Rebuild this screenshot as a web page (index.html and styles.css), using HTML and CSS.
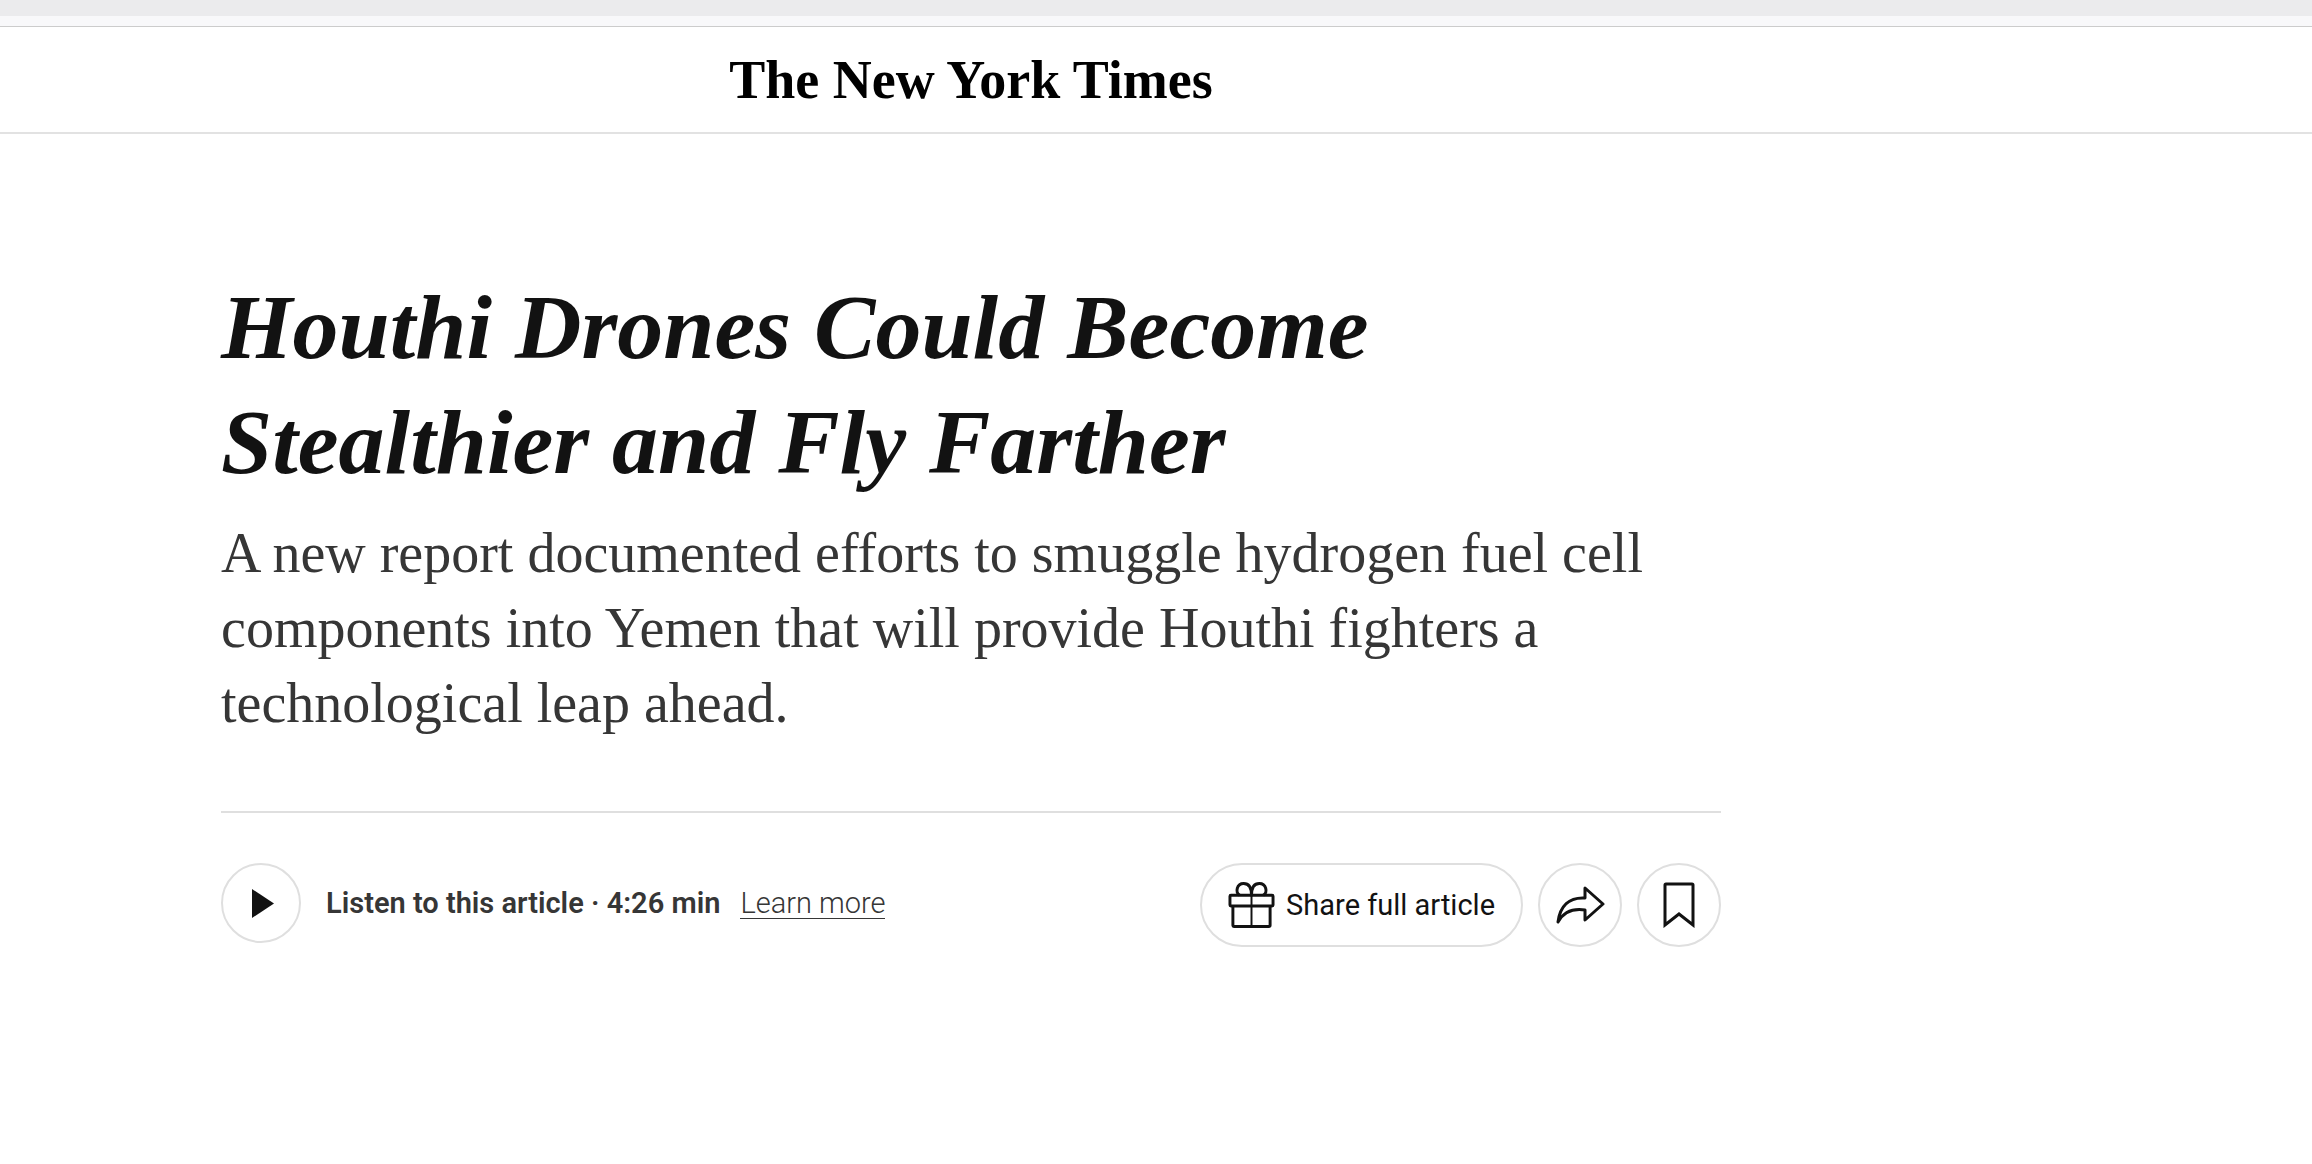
FILE: index.html
```html
<!DOCTYPE html>
<html lang="en">
<head>
<meta charset="utf-8">
<meta name="viewport" content="width=device-width, initial-scale=1">
<title>Houthi Drones Could Become Stealthier and Fly Farther</title>
<link rel="stylesheet" href="styles.css">
</head>
<body>
<div class="browser-edge"></div>
<header class="masthead">
  <div class="column masthead-inner"><a class="logo" href="#">The New York Times</a></div>
</header>
<main class="column">
  <article class="story">
    <h1 class="headline">Houthi Drones Could Become<br>Stealthier and Fly Farther</h1>
    <p class="summary">A new report documented efforts to smuggle hydrogen fuel cell<br>components into Yemen that will provide Houthi fighters a<br>technological leap ahead.</p>
    <div class="toolbar">
      <div class="listen">
        <button class="round play" type="button" aria-label="Play">
          <svg width="22" height="29" viewBox="0 0 22 29" aria-hidden="true"><path d="M0 0 22 14.5 0 29Z" fill="#121212"/></svg>
        </button>
        <span class="listen-label">Listen to this article · 4:26 min</span>
        <a class="learn" href="#">Learn more</a>
      </div>
      <div class="actions">
        <button class="share-gift" type="button">
          <svg width="47" height="48" viewBox="0 0 48 48" fill="none" stroke="#121212" stroke-width="2" stroke-linejoin="round" aria-hidden="true">
            <rect x="2" y="14" width="44" height="11" rx="1" stroke-width="3"/>
            <path d="M5 25V45Q5 46 6 46H42Q43 46 43 45V25" stroke-width="3"/>
            <path d="M24 14V46"/>
            <path d="M12 14C7 11 9 2 16 2C21 2 24 6 24 14C24 6 27 2 32 2C39 2 41 11 36 14" stroke-width="3"/>
          </svg>
          <span>Share full article</span>
        </button>
        <button class="round" type="button" aria-label="Share">
          <svg width="50" height="40" viewBox="0 0 50 40" fill="none" stroke="#121212" stroke-width="3" stroke-linejoin="round" aria-hidden="true"><path d="M30 3 48 19 30 35V25C17 23 8 28 3 37C5 21 14 12 30 13Z"/></svg>
        </button>
        <button class="round" type="button" aria-label="Save">
          <svg width="32" height="46" viewBox="0 0 32 46" fill="none" stroke="#121212" stroke-width="3" aria-hidden="true"><path d="M2 43V3Q2 2 3 2H29Q30 2 30 3V43L16 32Z"/></svg>
        </button>
      </div>
    </div>
  </article>
</main>
</body>
</html>
```
FILE: styles.css
```css
* {
  box-sizing: border-box;
}

body {
  margin: 0;
  background: #fff;
  color: #121212;
  font-family: Roboto, "Liberation Sans", Arial, sans-serif;
}

.browser-edge {
  height: 27px;
  border-top: 16px solid #ebebed;
  border-bottom: 1px solid #ccc;
  background: #f8f8fa;
}

.masthead {
  border-bottom: 2px solid #e2e2e2;
}

.column {
  width: 84%;
}

.masthead-inner {
  display: flex;
  align-items: center;
  justify-content: center;
  height: 105px;
}

.logo {
  color: #000;
  font: bold 54px/64px "Old English Text MT", "Liberation Serif", "Times New Roman", serif;
  text-decoration: none;
  white-space: nowrap;
}

.story {
  max-width: 1500px;
  margin: 0 auto;
  padding: 136px 0 60px;
}

.headline {
  margin: 0;
  font: italic bold 92px/115px "Liberation Serif", "Times New Roman", serif;
}

.summary {
  margin: 16px 0 70px;
  color: #363636;
  font: 56px/75px "Liberation Serif", "Times New Roman", serif;
}

.toolbar {
  display: flex;
  align-items: flex-start;
  justify-content: space-between;
  padding-top: 50px;
  border-top: 2px solid #dfdfdf;
}

.listen,
.actions {
  display: flex;
  align-items: center;
}

.listen {
  color: #363636;
  font-size: 29px;
  line-height: 30px;
}

.listen-label {
  margin: 0 20px 0 25px;
  font-weight: 600;
}

.learn {
  color: #363636;
  font-weight: 300;
  text-decoration: none;
  border-bottom: 1px solid #363636;
}

.actions {
  gap: 15px;
}

.round,
.share-gift {
  display: flex;
  align-items: center;
  justify-content: center;
  height: 84px;
  padding: 0;
  border: 2px solid #dfdfdf;
  border-radius: 42px;
  background: #fff;
  color: #121212;
}

.round {
  width: 84px;
}

.play {
  width: 80px;
  height: 80px;
  padding-left: 4px;
}

.share-gift {
  gap: 11px;
  padding: 0 26px;
  font: 29px/32px Roboto, "Liberation Sans", Arial, sans-serif;
}
```
